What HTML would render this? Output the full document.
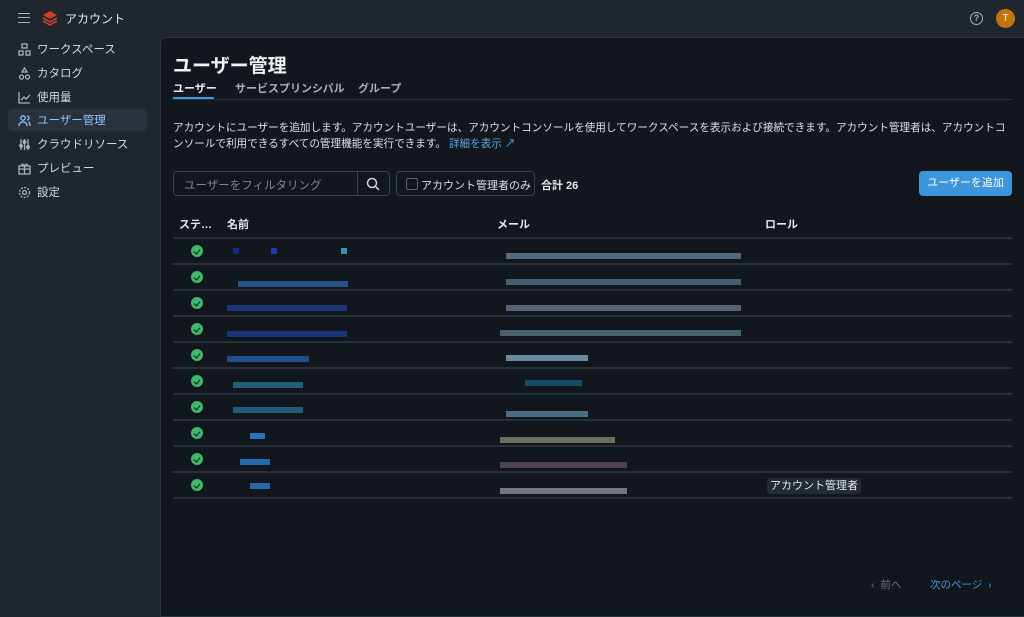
<!DOCTYPE html>
<html><head><meta charset="utf-8"><style>
*{box-sizing:border-box;margin:0;padding:0}
body{width:1024px;height:612px;background:#1f262d;font-family:"Liberation Sans","Noto Sans CJK JP",sans-serif;color:#e6e9ec;position:relative;overflow:hidden;font-size:12px}
.top{position:absolute;left:0;top:0;width:1024px;height:36px}
.nav{position:absolute;left:8px;width:139px;height:22px;display:flex;align-items:center;padding-left:10px;font-size:11.5px;color:#d4d9de;white-space:nowrap}
.nav svg{width:13px;height:13px;margin-right:6px;stroke:#a9b1b9;fill:none;stroke-width:1.3}
.nav.act{background:#28333d;border-radius:4px;color:#8ec5ff}
.nav.act svg{stroke:#8ec5ff}
.main{position:absolute;left:160px;top:37px;width:870px;height:580px;background:#12171d;border:1px solid #2a333b;border-radius:6px 0 0 0}
.line{position:absolute;left:173px;width:839px;height:2px;background:#283039}
.chk{position:absolute;left:191px;width:12px;height:12px;border-radius:50%;background:#3fb96b}
.chk:after{content:"";position:absolute;left:3.5px;top:2.5px;width:3px;height:5px;border:solid #12171d;border-width:0 1.6px 1.6px 0;transform:rotate(40deg)}
.px{position:absolute;height:6px}
.t{position:absolute;white-space:nowrap}
</style></head><body>
<div class="top">
<div style="position:absolute;left:18px;top:13px;width:12px;height:10px;border-top:1.5px solid #a9b1b9;border-bottom:1.5px solid #a9b1b9"><div style="margin-top:2.8px;height:1.5px;background:#a9b1b9"></div></div>
<svg style="position:absolute;left:42px;top:10px" width="16" height="16" viewBox="0 0 16 16"><path d="M8 1L15 5 8 9 1 5Z" fill="#d33a2c"/><path d="M1 8l7 4 7-4M1 11l7 4 7-4" stroke="#d33a2c" stroke-width="1.6" fill="none"/></svg>
<div class="t" style="left:65px;top:10px;font-size:12px;color:#e6e9ec">アカウント</div>
<div style="position:absolute;left:970px;top:12px;width:13px;height:13px;border:1.5px solid #a9b1b9;border-radius:50%;font-size:9px;color:#a9b1b9;text-align:center;line-height:10px;font-weight:bold">?</div>
<div style="position:absolute;left:996px;top:9px;width:19px;height:19px;border-radius:50%;background:#c2740f;color:#fff;font-size:10px;text-align:center;line-height:19px">T</div>
</div>
<div class="nav" style="top:38px"><svg viewBox="0 0 13 13"><rect x="4" y="1" width="5" height="4"/><rect x="1" y="8" width="4" height="4"/><rect x="8" y="8" width="4" height="4"/></svg>ワークスペース</div>
<div class="nav" style="top:62px"><svg viewBox="0 0 13 13"><path d="M6.5 1L9 5H4Z"/><circle cx="3.5" cy="10" r="2"/><circle cx="9.5" cy="10" r="2"/></svg>カタログ</div>
<div class="nav" style="top:86px"><svg viewBox="0 0 13 13"><path d="M1 1v11h11M3 9l3-3 2 2 4-4"/></svg>使用量</div>
<div class="nav act" style="top:109px"><svg viewBox="0 0 13 13"><circle cx="5" cy="4" r="2.2"/><path d="M1 12c0-3 2-4 4-4s4 1 4 4M9 2a2 2 0 010 4M10.5 8c1 .5 1.5 2 1.5 4"/></svg>ユーザー管理</div>
<div class="nav" style="top:133px"><svg viewBox="0 0 13 13"><path d="M3 1v11M6.5 1v11M10 1v11"/><circle cx="3" cy="8" r="1.3"/><circle cx="6.5" cy="4" r="1.3"/><circle cx="10" cy="9" r="1.3"/></svg>クラウドリソース</div>
<div class="nav" style="top:157px"><svg viewBox="0 0 13 13"><rect x="1" y="4" width="11" height="8"/><path d="M1 7h11M6.5 4v8M6.5 4C5 1 3 2 4 4M6.5 4C8 1 10 2 9 4"/></svg>プレビュー</div>
<div class="nav" style="top:181px"><svg viewBox="0 0 13 13"><circle cx="6.5" cy="6.5" r="2"/><circle cx="6.5" cy="6.5" r="5" stroke-dasharray="2 1.3"/></svg>設定</div>
<div class="main"></div>
<div class="t" style="left:173px;top:51px;font-size:19px;font-weight:bold;color:#f0f2f4">ユーザー管理</div>
<div class="t" style="left:173px;top:80px;font-size:11px;font-weight:bold;color:#e6e9ec">ユーザー</div>
<div style="position:absolute;left:173px;top:97px;width:41px;height:2px;background:#4299e1"></div>
<div class="t" style="left:235px;top:80px;font-size:11px;font-weight:bold;color:#a9b1b9">サービスプリンシパル</div>
<div class="t" style="left:358px;top:80px;font-size:11px;font-weight:bold;color:#a9b1b9">グループ</div>
<div style="position:absolute;left:173px;top:99px;width:839px;height:1px;background:#2a333b"></div>
<div style="position:absolute;left:173px;top:120px;width:842px;font-size:10.6px;line-height:16px;color:#dde1e5">アカウントにユーザーを追加します。アカウントユーザーは、アカウントコンソールを使用してワークスペースを表示および接続できます。アカウント管理者は、アカウントコンソールで利用できるすべての管理機能を実行できます。 <span style="color:#5aa9e6">詳細を表示 ↗</span></div>
<div style="position:absolute;left:173px;top:171px;width:217px;height:25px;border:1px solid #38424b;border-radius:4px"><div class="t" style="left:10px;top:5px;color:#7d868e;font-size:11.5px">ユーザーをフィルタリング</div><div style="position:absolute;left:183px;top:0;width:1px;height:23px;background:#38424b"></div>
<svg style="position:absolute;left:192px;top:5px" width="14" height="14" viewBox="0 0 14 14"><circle cx="6" cy="6" r="4.5" stroke="#d4d9de" stroke-width="1.5" fill="none"/><path d="M9.5 9.5L13 13" stroke="#d4d9de" stroke-width="1.5"/></svg></div>
<div style="position:absolute;left:396px;top:171px;width:139px;height:25px;border:1px solid #38424b;border-radius:4px"><div style="position:absolute;left:9px;top:6px;width:12px;height:12px;border:1px solid #5a646d;border-radius:2px"></div><div class="t" style="left:24px;top:5px;font-size:11px;color:#dde1e5">アカウント管理者のみ</div></div>
<div class="t" style="left:541px;top:177px;font-size:11px;font-weight:bold">合計 26</div>
<div style="position:absolute;left:919px;top:171px;width:93px;height:25px;background:#3d95dc;border-radius:4px;color:#fff;font-size:11px;text-align:center;line-height:25px;white-space:nowrap">ユーザーを追加</div>
<div class="t" style="left:179px;top:216px;font-size:11px;font-weight:bold">ステ…</div>
<div class="t" style="left:227px;top:216px;font-size:11px;font-weight:bold">名前</div>
<div class="t" style="left:497px;top:216px;font-size:11px;font-weight:bold">メール</div>
<div class="t" style="left:765px;top:216px;font-size:11px;font-weight:bold">ロール</div>
<div class="line" style="top:237px"></div>
<div class="line" style="top:263px"></div><div class="line" style="top:289px"></div><div class="line" style="top:315px"></div><div class="line" style="top:341px"></div><div class="line" style="top:367px"></div><div class="line" style="top:393px"></div><div class="line" style="top:419px"></div><div class="line" style="top:445px"></div><div class="line" style="top:471px"></div><div class="line" style="top:497px"></div>
<div class="chk" style="top:245px"></div><div class="chk" style="top:271px"></div><div class="chk" style="top:297px"></div><div class="chk" style="top:323px"></div><div class="chk" style="top:349px"></div><div class="chk" style="top:375px"></div><div class="chk" style="top:401px"></div><div class="chk" style="top:427px"></div><div class="chk" style="top:453px"></div><div class="chk" style="top:479px"></div>
<div class="px" style="left:233px;top:248px;width:6px;background:#1a2a8a"></div><div class="px" style="left:271px;top:248px;width:6px;background:#1a3ab0"></div><div class="px" style="left:341px;top:248px;width:6px;background:#3b8fbf"></div>
<div class="px" style="left:238px;top:281px;width:110px;background:#2d6fb0;opacity:.7"></div>
<div class="px" style="left:227px;top:305px;width:120px;background:#1d45a0;opacity:.7"></div>
<div class="px" style="left:227px;top:331px;width:120px;background:#1d45a0;opacity:.7"></div>
<div class="px" style="left:227px;top:356px;width:82px;background:#2a65c0;opacity:.7"></div>
<div class="px" style="left:233px;top:382px;width:70px;background:#2c8ab5;opacity:.6"></div>
<div class="px" style="left:233px;top:407px;width:70px;background:#2c8ab5;opacity:.6"></div>
<div class="px" style="left:250px;top:433px;width:15px;background:#2a70c0"></div>
<div class="px" style="left:240px;top:459px;width:30px;background:#2a80d0;opacity:.8"></div>
<div class="px" style="left:250px;top:483px;width:20px;background:#2a80d0;opacity:.8"></div>
<div class="px" style="left:506px;top:253px;width:235px;background:#6d8fa8;opacity:.7"></div>
<div class="px" style="left:506px;top:279px;width:235px;background:#6d8fa8;opacity:.6"></div>
<div class="px" style="left:506px;top:305px;width:235px;background:#7a7fa0;opacity:.7"></div>
<div class="px" style="left:500px;top:330px;width:241px;background:#6d8fa8;opacity:.6"></div>
<div class="px" style="left:506px;top:355px;width:82px;background:#8fbcd8;opacity:.7"></div>
<div class="px" style="left:525px;top:380px;width:57px;background:#2080b0;opacity:.5"></div>
<div class="px" style="left:506px;top:411px;width:82px;background:#6fa8c8;opacity:.6"></div>
<div class="px" style="left:500px;top:437px;width:115px;background:#a8a890;opacity:.6"></div>
<div class="px" style="left:500px;top:462px;width:127px;background:#8a6f80;opacity:.5"></div>
<div class="px" style="left:500px;top:488px;width:127px;background:#b0b8c0;opacity:.6"></div>
<div class="t" style="left:767px;top:478px;padding:0 3px;height:16px;line-height:16px;background:#232b33;border-radius:3px;font-size:11px;color:#e6e9ec">アカウント管理者</div>
<div class="t" style="left:871px;top:577px;font-size:10.5px;color:#6c767f">‹&nbsp; 前へ</div>
<div class="t" style="left:930px;top:577px;font-size:10.5px;color:#4b94d8">次のページ &nbsp;›</div>
</body></html>
